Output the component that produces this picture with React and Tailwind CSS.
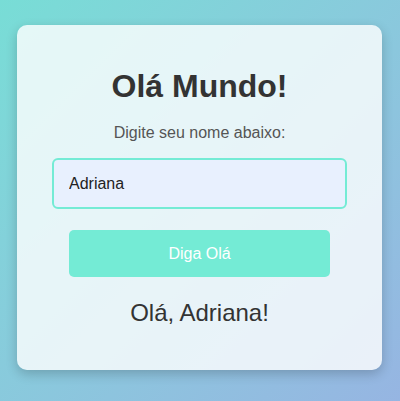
import React, { useState } from 'react';

const App = () => {
  const [name, setName] = useState('Adriana');
  const [greeting, setGreeting] = useState('Olá, Adriana!');

  const handleSubmit = (e) => {
    e.preventDefault();
    setGreeting(`Olá, ${name}!`);
  };

  return (
    <div className="min-h-[401px] bg-linear-to-br from-[#78ddd6] to-[#96b5e2] pl-[17px] pr-[18px] pt-[25px] font-['Liberation_Sans',Arial,sans-serif]">
      <div className="bg-white/80 rounded-[10px] shadow-[0_4px_12px_rgba(0,0,0,0.2)] px-[35px] pt-[43px] pb-[43px] text-center">
        <h1 className="text-[32px] leading-[37px] font-bold text-[#333]">Olá Mundo!</h1>
        <p className="mt-[19px] text-[16px] leading-[18px] text-[#555]">Digite seu nome abaixo:</p>
        <form onSubmit={handleSubmit}>
          <input
            type="text"
            value={name}
            onChange={(e) => setName(e.target.value)}
            className="mt-[16px] block w-full h-[51px] px-[15px] text-[16px] text-[#222] bg-[#e8f0fe] border-2 border-[#74ebd5] rounded-[6px] outline-none"
          />
          <button
            type="submit"
            className="mt-[21px] mx-[17px] block w-[261px] h-[47px] bg-[#74ebd5] text-white text-[16px] rounded-[5px]"
          >
            Diga Olá
          </button>
        </form>
        <p className="mt-[22px] text-[24px] leading-[28px] text-[#333]">{greeting}</p>
      </div>
    </div>
  );
};

export default App;
